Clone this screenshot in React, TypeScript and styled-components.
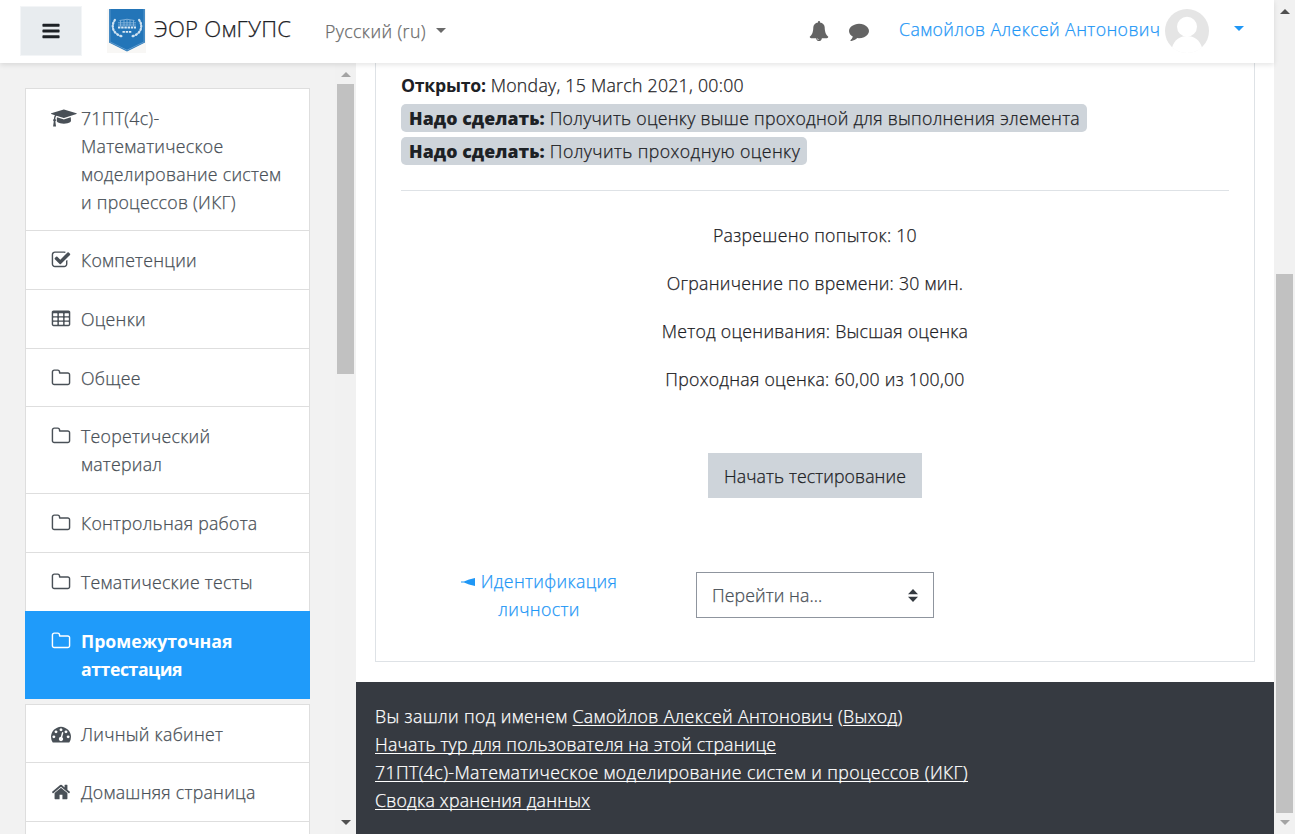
import React from 'react';
import styled, { createGlobalStyle, css } from 'styled-components';

const GlobalStyle = createGlobalStyle`
  *, *::before, *::after { box-sizing: border-box; }
  html, body { margin: 0; height: 100%; overflow: hidden; }
  body {
    background: #fff;
    color: #1d2125;
    font-family: "Open Sans", "Noto Sans", sans-serif;
    font-size: 17.7px;
    font-weight: 300;
    line-height: 28px;
    letter-spacing: 0.27px;
    -webkit-text-stroke: 0.25px currentColor;
  }
  b { -webkit-text-stroke: 0; }
  svg { display: block; flex: none; }
  a { color: #1f97f6; text-decoration: none; }
`;

const Window = styled.div`
  display: flex;
  width: 1295px;
  height: 834px;
  overflow: hidden;
`;

const Page = styled.div`
  display: flex;
  flex-direction: column;
  width: 1274px;
  height: 834px;
`;

/* ---------- header ---------- */

const Header = styled.header`
  position: relative;
  z-index: 2;
  display: flex;
  align-items: center;
  flex: none;
  height: 63px;
  padding: 0 30px 1px 21px;
  background: #fff;
  box-shadow: 0 2px 5px rgba(0, 0, 0, 0.1);
`;

const MenuToggle = styled.button`
  display: flex;
  align-items: center;
  justify-content: center;
  width: 60px;
  height: 48px;
  padding: 0;
  border: 0;
  background: #e8ecef;
  box-shadow: 0 0 0 1px #f3f5f7;
  color: #1d2125;
`;

const Brand = styled.a`
  display: flex;
  align-items: center;
  margin-left: 26px;
  color: #1d2125;
`;

const BrandName = styled.span`
  width: 139px;
  margin-left: 8px;
  padding-bottom: 6px;
  font-size: 22.1px;
  letter-spacing: 0.27px;
  white-space: nowrap;
`;

const Language = styled.div`
  display: flex;
  align-items: center;
  margin-left: 32px;
  padding-bottom: 1px;
  color: #6a6a6a;
  letter-spacing: 0.4px;
  white-space: nowrap;
`;

const Caret = styled.span<{ $gap: number; $lift?: number }>`
  margin-left: ${p => p.$gap}px;
  margin-bottom: ${p => p.$lift ?? 0}px;
  border: 5px solid transparent;
  border-top-color: currentColor;
  border-bottom: 0;
`;

const HeaderTools = styled.div`
  display: flex;
  align-items: center;
  gap: 20px;
  margin-left: auto;
  color: #646464;
`;

const UserMenu = styled.a`
  display: flex;
  align-items: center;
  margin-left: 10px;
  letter-spacing: 0.4px;
  white-space: nowrap;
`;

const UserName = styled.span`
  width: 266px;
  padding-bottom: 5px;
`;

/* ---------- sidebar ---------- */

const Body = styled.div`
  display: flex;
  flex: 1;
  min-height: 0;
`;

const Drawer = styled.aside`
  display: flex;
  flex: none;
  width: 356px;
  background: #f2f2f2;
`;

const DrawerContent = styled.nav`
  display: flex;
  flex-direction: column;
  gap: 5px;
  width: 335px;
  padding: 25px 25px 0 25px;
  overflow: hidden;
`;

const NavGroup = styled.ul`
  flex: none;
  margin: 0;
  padding: 0;
  list-style: none;
`;

const NavItem = styled.li<{ $active?: boolean; $tight?: boolean }>`
  display: flex;
  padding: 15px 16px ${p => (p.$tight ? 14 : 15)}px 25px;
  border: 1px solid #dedede;
  border-bottom: 0;
  background: #fff;
  color: #495057;
  ${p =>
    p.$active &&
    css`
      padding-bottom: 16px;
      border-color: #1f9bfa;
      background: #1f9bfa;
      color: #fff;
      font-weight: 700;
      letter-spacing: 0;
      -webkit-text-stroke: 0;
    `}
`;

const NavIcon = styled.span`
  flex: none;
  width: 30px;
  padding-top: 4px;
`;

const NavLabel = styled.span<{ $narrow?: boolean }>`
  letter-spacing: ${p => (p.$narrow ? '-0.45px' : 'inherit')};
`;

/* ---------- scrollbars ---------- */

const Track = styled.div<{ $width: number; $pad: number }>`
  display: flex;
  flex-direction: column;
  flex: none;
  align-items: center;
  width: ${p => p.$width}px;
  padding: ${p => p.$pad}px 0 9px;
  background: #f1f1f1;
`;

const Thumb = styled.div<{ $offset: number; $size: number }>`
  width: 17px;
  height: ${p => p.$size}px;
  margin: ${p => p.$offset}px 0 auto;
  background: #c1c1c1;
`;

const Arrow = styled.span<{ $down?: boolean; $dim?: boolean }>`
  border: 5px solid transparent;
  ${p => (p.$down ? 'border-bottom-width: 0;' : 'border-top-width: 0;')}
  ${p => (p.$down ? 'border-top-color' : 'border-bottom-color')}: ${p => (p.$dim ? '#a3a3a3' : '#505050')};
`;

/* ---------- main ---------- */

const Main = styled.main`
  display: flex;
  flex: 1;
  flex-direction: column;
`;

const Card = styled.section`
  height: 599px;
  margin: 0 19px 20px;
  padding: 8px 25px 0;
  border: 1px solid #dee2e6;
  border-top: 0;
`;

const Opened = styled.div`
  b { font-weight: 700; letter-spacing: -0.25px; }
`;

const Conditions = styled.div`
  display: flex;
  flex-direction: column;
  align-items: flex-start;
  gap: 5px;
  margin-top: 5px;
  padding-bottom: 25px;
  border-bottom: 1px solid #dee2e6;
`;

const Condition = styled.span<{ $spacing: number }>`
  height: 28px;
  padding: 0 7px 0 8px;
  border-radius: 5px;
  background: #ced4da;
  letter-spacing: ${p => p.$spacing}px;
  white-space: nowrap;
  b { font-weight: 800; letter-spacing: 0.08px; }
`;

const QuizInfo = styled.div`
  display: flex;
  flex-direction: column;
  gap: 20px;
  margin-top: 30px;
  text-align: center;
`;

const StartButton = styled.button`
  display: block;
  width: 214px;
  height: 45px;
  margin: 60px auto 69px;
  padding: 0;
  border: 0;
  background: #ced4da;
  color: #1d2125;
  font: inherit;
  letter-spacing: 0.1px;
`;

const ActivityNav = styled.div`
  display: grid;
  grid-template-columns: repeat(3, 1fr);
  text-align: center;
`;

const PreviousLink = styled.a`
  padding: 0 55px;
  letter-spacing: 0.36px;
  svg { display: inline-block; margin-right: 6px; vertical-align: 2px; }
`;

const JumpSelect = styled.div`
  display: flex;
  align-items: center;
  justify-content: space-between;
  width: 238px;
  height: 46px;
  margin: 5px auto 0;
  padding: 0 15px;
  border: 1px solid #8f959e;
  color: #495057;
  letter-spacing: 0.1px;
`;

const Footer = styled.footer`
  flex: 1;
  padding: 20px 19px 0;
  background: #363a41;
  color: #fff;
  letter-spacing: 0.39px;
  white-space: nowrap;
  a {
    color: #fff;
    text-decoration: underline;
    text-decoration-thickness: 1px;
    text-underline-offset: 2px;
    text-decoration-skip-ink: none;
  }
`;

const FooterLine = styled.div<{ $spacing?: number }>`
  letter-spacing: ${p => p.$spacing ?? 0.39}px;
`;

/* ---------- icons ---------- */

const cells = [0, 1, 2].flatMap(row =>
  [0, 1, 2].map(
    col =>
      `M${224 + col * 512} ${384 + row * 384}h320q32 0 32 32v192q0 32-32 32h-320q-32 0-32-32v-192q0-32 32-32z`,
  ),
).join('');

const icons = {
  bars: 'M1664 1344v128q0 26-19 45t-45 19h-1408q-26 0-45-19t-19-45v-128q0-26 19-45t45-19h1408q26 0 45 19t19 45zm0-512v128q0 26-19 45t-45 19h-1408q-26 0-45-19t-19-45v-128q0-26 19-45t45-19h1408q26 0 45 19t19 45zm0-512v128q0 26-19 45t-45 19h-1408q-26 0-45-19t-19-45v-128q0-26 19-45t45-19h1408q26 0 45 19t19 45z',
  folder:
    'M1600 1312v-704q0-40-28-68t-68-28h-704q-40 0-68-28t-28-68v-64q0-40-28-68t-68-28h-320q-40 0-68 28t-28 68v960q0 40 28 68t68 28h1216q40 0 68-28t28-68zm128-704v704q0 92-66 158t-158 66h-1216q-92 0-158-66t-66-158v-960q0-92 66-158t158-66h320q92 0 158 66t66 158v32h672q92 0 158 66t66 158z',
  check:
    'M1472 930v318q0 119-84.5 203.5t-203.5 84.5h-832q-119 0-203.5-84.5t-84.5-203.5v-832q0-119 84.5-203.5t203.5-84.5h832q63 0 117 25 15 7 18 23 3 17-9 29l-49 49q-10 10-23 10-3 0-9-2-23-6-45-6h-832q-66 0-113 47t-47 113v832q0 66 47 113t113 47h832q66 0 113-47t47-113v-254q0-13 9-22l64-64q10-10 23-10 6 0 12 3 20 8 20 29zm231-489l-814 814q-24 24-57 24t-57-24l-430-430q-24-24-24-57t24-57l110-110q24-24 57-24t57 24l263 263 647-647q24-24 57-24t57 24l110 110q24 24 24 57t-24 57z',
  table: `M224 128h1344q66 0 113 47t47 113v1088q0 66-47 113t-113 47h-1344q-66 0-113-47t-47-113v-1088q0-66 47-113t113-47z${cells}`,
  course:
    'M1774 836l18 316q4 69-82 128t-235 93.5-323 34.5-323-34.5-235-93.5-82-128l18-316 574 181q22 7 48 7t48-7zm530-324q0 23-22 31l-1120 352q-4 1-10 1t-10-1l-652-206q-43 34-71 111.5t-34 178.5q63 36 63 109 0 69-58 107l58 433q2 14-8 25-9 11-24 11h-192q-15 0-24-11-10-11-8-25l58-433q-58-38-58-107 0-73 65-111 11-207 98-330l-333-104q-22-8-22-31t22-31l1120-352q4-1 10-1t10 1l1120 352q22 8 22 31z',
  dashboard:
    'M384 1152q0-53-37.5-90.5t-90.5-37.5-90.5 37.5-37.5 90.5 37.5 90.5 90.5 37.5 90.5-37.5 37.5-90.5zm192-448q0-53-37.5-90.5t-90.5-37.5-90.5 37.5-37.5 90.5 37.5 90.5 90.5 37.5 90.5-37.5 37.5-90.5zm428 481l101-382q6-26-7.5-48.5t-38.5-29.5-48 6.5-30 39.5l-101 382q-60 5-107 43.5t-63 98.5q-20 77 20 146t117 89 146-20 89-117q16-60-6-117t-72-91zm660-33q0-53-37.5-90.5t-90.5-37.5-90.5 37.5-37.5 90.5 37.5 90.5 90.5 37.5 90.5-37.5 37.5-90.5zm-640-640q0-53-37.5-90.5t-90.5-37.5-90.5 37.5-37.5 90.5 37.5 90.5 90.5 37.5 90.5-37.5 37.5-90.5zm448 192q0-53-37.5-90.5t-90.5-37.5-90.5 37.5-37.5 90.5 37.5 90.5 90.5 37.5 90.5-37.5 37.5-90.5zm320 448q0 261-141 483-19 29-54 29h-1402q-35 0-54-29-141-221-141-483 0-182 71-348t191-286 286-191 348-71 348 71 286 191 191 286 71 348z',
  home: 'M1472 992v480q0 26-19 45t-45 19h-384v-384h-256v384h-384q-26 0-45-19t-19-45v-480q0-1 .5-3t.5-3l575-474 575 474q1 2 1 6zm223-69l-62 74q-8 9-21 11h-3q-13 0-21-7l-692-577-692 577q-12 8-24 7-13-2-21-11l-62-74q-8-10-7-23.5t11-21.5l719-599q32-26 76-26t76 26l244 204v-195q0-14 9-23t23-9h192q14 0 23 9t9 23v408l219 182q10 8 11 21.5t-7 23.5z',
  bell: 'M912 1696q0-16-16-16-59 0-101.5-42.5t-42.5-101.5q0-16-16-16t-16 16q0 73 51.5 124.5t124.5 51.5q16 0 16-16zm816-288q0 52-38 90t-90 38h-448q0 106-75 181t-181 75-181-75-75-181h-448q-52 0-90-38t-38-90q50-42 91-88t85-119.5 74.5-158.5 50-206 19.5-260q0-152 117-282.5t307-158.5q-8-19-8-39 0-40 28-68t68-28 68 28 28 68q0 20-8 39 190 28 307 158.5t117 282.5q0 139 19.5 260t50 206 74.5 158.5 85 119.5 91 88z',
  comment:
    'M1792 896q0 174-120 321.5t-326 233-450 85.5q-70 0-145-8-198 175-460 242-49 14-114 22-17 2-30.5-9t-17.5-29v-1q-3-4-.5-12t2-10 4.5-9.5l6-9 7-8.5 8-9q7-8 31-34.5t34.5-38 31-39.5 32.5-51 27-59 26-76q-157-89-247.5-220t-90.5-281q0-130 71-248.5t191-204.5 286-136.5 348-50.5q244 0 450 85.5t326 233 120 321.5z',
};

type IconName = keyof typeof icons;

function Icon({ name, size = 20 }: { name: IconName; size?: number }) {
  const wide = name === 'course';
  return (
    <svg
      width={wide ? (size * 2304) / 1792 : size}
      height={size}
      viewBox={wide ? '0 0 2304 1792' : '0 0 1792 1792'}
      fill="currentColor"
      fillRule={name === 'table' ? 'evenodd' : 'nonzero'}
    >
      <path d={icons[name]} />
    </svg>
  );
}

function Crest() {
  const leaves = [
    [7.6, 11.5, -30], [6.2, 14.2, -10], [5.8, 17.3, 5], [6.3, 20.4, 20], [8, 23.2, 40], [10.6, 25.4, 55], [13.8, 27, 70],
  ];
  return (
    <svg width="39" height="44" viewBox="0 0 39 44">
      <path d="M0 0h39v44H0z" fill="#f8f7f5" />
      <path d="M2 0h36v33.5L20 42.6 2 33.5z" fill="#2375b8" />
      <path d="M2.900 0v32.900L20 41.200l17.100-8.300V0" fill="none" stroke="#6fa5d2" strokeWidth=".8" />
      <g fill="#cfe2f1">
        {leaves.map(([x, y, r]) => (
          <g key={y}>
            <ellipse cx={x} cy={y} rx="1.200" ry="1.800" transform={`rotate(${-r} ${x} ${y})`} />
            <ellipse cx={40 - x} cy={y} rx="1.200" ry="1.800" transform={`rotate(${r} ${40 - x} ${y})`} />
          </g>
        ))}
      </g>
      <path d="M12.500 11.500q7.500-2.500 15 0M11 13.800h18M11 16h18M13.500 11.500v6M17 11v6M20 10.500v6.500M23 11v6M26.500 11.500v6" fill="none" stroke="#8fbade" strokeWidth=".8" />
      <path d="M11 18.500h18M15.500 22.800h9.500" fill="none" stroke="#dceaf5" strokeWidth="1.800" strokeDasharray="2.400 .8" />
    </svg>
  );
}

function Avatar() {
  return (
    <svg width="44" height="44" viewBox="0 0 44 44">
      <circle cx="22" cy="22" r="22" fill="#e5e5e5" />
      <circle cx="22" cy="17.700" r="10" fill="#fff" />
      <path d="M7 38.500C9.500 31 14.500 27 22 27s12.500 4 15 11.500C33 42 28 44 22 44S11 42 7 38.500z" fill="#fff" />
    </svg>
  );
}

type Entry = { icon?: IconName; lines: string[]; active?: boolean; tight?: boolean };

const courseNav: Entry[] = [
  { icon: 'course', lines: ['71ПТ(4с)-', 'Математическое', 'моделирование систем', 'и процессов (ИКГ)'], tight: true },
  { icon: 'check', lines: ['Компетенции'] },
  { icon: 'table', lines: ['Оценки'] },
  { icon: 'folder', lines: ['Общее'], tight: true },
  { icon: 'folder', lines: ['Теоретический', 'материал'] },
  { icon: 'folder', lines: ['Контрольная работа'] },
  { icon: 'folder', lines: ['Тематические тесты'] },
  { icon: 'folder', lines: ['Промежуточная', 'аттестация'], active: true },
];

const siteNav: Entry[] = [
  { icon: 'dashboard', lines: ['Личный кабинет'], tight: true },
  { icon: 'home', lines: ['Домашняя страница'] },
  { lines: [] },
];

function Group({ entries }: { entries: Entry[] }) {
  return (
    <NavGroup>
      {entries.map((entry, i) => (
        <NavItem key={i} $active={entry.active} $tight={entry.tight}>
          <NavIcon>{entry.icon && <Icon name={entry.icon} />}</NavIcon>
          <div>
            {entry.lines.map((line, n) => (
              <div key={line}>
                <NavLabel $narrow={entry.active && n === 1}>{line}</NavLabel>
              </div>
            ))}
          </div>
        </NavItem>
      ))}
    </NavGroup>
  );
}

export default function App() {
  return (
    <Window>
      <GlobalStyle />
      <Page>
        <Header>
          <MenuToggle>
            <Icon name="bars" size={20} />
          </MenuToggle>
          <Brand>
            <Crest />
            <BrandName>ЭОР ОмГУПС</BrandName>
          </Brand>
          <Language>
            Русский (ru)
            <Caret $gap={10} />
          </Language>
          <HeaderTools>
            <Icon name="bell" />
            <Icon name="comment" />
            <UserMenu>
              <UserName>Самойлов Алексей Антонович</UserName>
              <Avatar />
              <Caret $gap={25} $lift={5} />
            </UserMenu>
          </HeaderTools>
        </Header>
        <Body>
          <Drawer>
            <DrawerContent>
              <Group entries={courseNav} />
              <Group entries={siteNav} />
            </DrawerContent>
            <Track $width={21} $pad={9}>
              <Arrow $dim />
              <Thumb $offset={7} $size={290} />
              <Arrow $down />
            </Track>
          </Drawer>
          <Main>
            <Card>
              <Opened>
                <b>Открыто:</b> Monday, 15 March 2021, 00:00
              </Opened>
              <Conditions>
                <Condition $spacing={0.27}>
                  <b>Надо сделать:</b> Получить оценку выше проходной для выполнения элемента
                </Condition>
                <Condition $spacing={0.42}>
                  <b>Надо сделать:</b> Получить проходную оценку
                </Condition>
              </Conditions>
              <QuizInfo>
                <div>Разрешено попыток: 10</div>
                <div>Ограничение по времени: 30 мин.</div>
                <div>Метод оценивания: Высшая оценка</div>
                <div>Проходная оценка: 60,00 из 100,00</div>
              </QuizInfo>
              <StartButton>Начать тестирование</StartButton>
              <ActivityNav>
                <PreviousLink>
                  <svg width="14" height="8" viewBox="0 0 14 8" fill="currentColor">
                    <path d="M0 3.500h3L8 1.500 14 0v8L8 6.500 3 4.500H0z" />
                  </svg>
                  Идентификация личности
                </PreviousLink>
                <JumpSelect>
                  Перейти на...
                  <svg width="10" height="13" viewBox="0 0 10 13" fill="#343a40">
                    <path d="M0 5.200L5 0l5 5.200zM0 7.800h10L5 13z" />
                  </svg>
                </JumpSelect>
              </ActivityNav>
            </Card>
            <Footer>
              <FooterLine $spacing={0.36}>
                Вы зашли под именем <a>Самойлов Алексей Антонович</a> (<a>Выход</a>)
              </FooterLine>
              <FooterLine $spacing={0.18}>
                <a>Начать тур для пользователя на этой странице</a>
              </FooterLine>
              <FooterLine>
                <a>71ПТ(4с)-Математическое моделирование систем и процессов (ИКГ)</a>
              </FooterLine>
              <FooterLine $spacing={0.25}>
                <a>Сводка хранения данных</a>
              </FooterLine>
            </Footer>
          </Main>
        </Body>
      </Page>
      <Track $width={21} $pad={9}>
        <Arrow />
        <Thumb $offset={260} $size={539} />
        <Arrow $down $dim />
      </Track>
    </Window>
  );
}
